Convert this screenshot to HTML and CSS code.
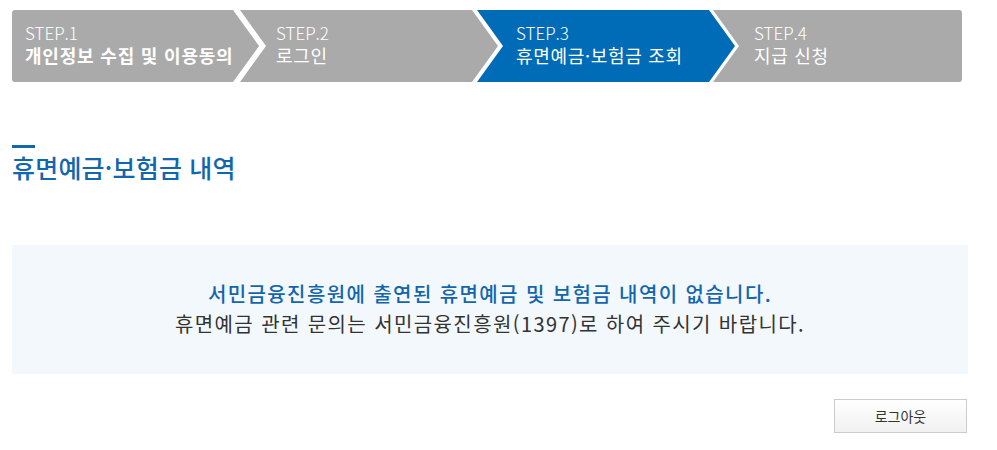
FILE: index.html
```html
<!DOCTYPE html>
<html lang="ko">
<head>
    <meta charset="UTF-8">
    <meta name="viewport" content="width=device-width, initial-scale=1.0">
    <title>휴면예금·보험금 조회</title>
    <link rel="stylesheet" href="styles.css">
</head>
<body>
    <div class="wrap">
        <ol class="steps">
            <li class="step step-first">
                <span class="step-num">STEP.1</span>
                <strong class="step-name">개인정보 수집 및 이용동의</strong>
            </li>
            <li class="step step-mid">
                <span class="step-num">STEP.2</span>
                <span class="step-name">로그인</span>
            </li>
            <li class="step step-mid step-on">
                <span class="step-num">STEP.3</span>
                <span class="step-name">휴면예금·보험금 조회</span>
            </li>
            <li class="step step-last">
                <span class="step-num">STEP.4</span>
                <span class="step-name">지급 신청</span>
            </li>
        </ol>

        <h2 class="title">휴면예금·보험금 내역</h2>

        <div class="result-box">
            <p class="result-main">서민금융진흥원에 출연된 휴면예금 및 보험금 내역이 없습니다.</p>
            <p class="result-sub">휴면예금 관련 문의는 서민금융진흥원(1397)로 하여 주시기 바랍니다.</p>
        </div>

        <div class="btn-area">
            <button type="button" class="btn-logout">로그아웃</button>
        </div>
    </div>
</body>
</html>
```

FILE: styles.css
```css
body {
    font-family: "Noto Sans CJK KR", "Noto Sans", sans-serif;
    margin: 0;
    padding: 0;
    color: #333;
    background: #fff;
}
.wrap {
    width: 956px;
    padding: 10px 0 0 12px;
}
.steps {
    display: flex;
    list-style: none;
    margin: 0 6px 0 0;
    padding: 0;
    height: 72px;
}
.step {
    display: flex;
    flex-direction: column;
    justify-content: center;
    box-sizing: border-box;
    height: 72px;
    padding-bottom: 4px;
    background-color: #aaaaaa;
    color: #fff;
    font-size: 18px;
    line-height: 22px;
}
.step-on {
    background-color: #006cb7;
}
.step-first {
    width: 247px;
    padding-left: 13px;
    border-radius: 3px 0 0 3px;
    clip-path: polygon(0 0, calc(100% - 26px) 0, 100% 50%, calc(100% - 26px) 100%, 0 100%);
}
.step-mid {
    width: 258px;
    margin-left: -19px;
    padding-left: 36px;
    clip-path: polygon(0 0, calc(100% - 26px) 0, 100% 50%, calc(100% - 26px) 100%, 0 100%, 26px 50%);
}
.step-mid.step-on {
    margin-left: -21px;
    padding-left: 39px;
}
.step-last {
    flex: 1;
    margin-left: -22px;
    padding-left: 41px;
    border-radius: 0 3px 3px 0;
    clip-path: polygon(0 0, 100% 0, 100% 100%, 0 100%, 26px 50%);
}
.step-num {
    font-size: 17px;
    font-weight: 300;
}
.step-name {
    font-weight: 400;
    letter-spacing: 0.7px;
}
.step-first .step-name {
    font-weight: 700;
    letter-spacing: 0.8px;
}
.title {
    margin: 63px 0 0;
    color: #1266ae;
    font-size: 25px;
    font-weight: 500;
    line-height: 30px;
    letter-spacing: 0.2px;
}
.title:before {
    content: "";
    display: block;
    width: 23px;
    height: 3px;
    margin-bottom: 4px;
    background-color: #1266ae;
}
.result-box {
    margin-top: 63px;
    padding: 34px 0 35px;
    background-color: #f2f8fc;
    text-align: center;
    font-size: 20px;
    line-height: 30px;
    letter-spacing: 1.4px;
}
.result-box p {
    margin: 0;
}
.result-main {
    color: #1266ae;
    font-weight: 500;
}
.result-sub {
    color: #333;
}
.btn-area {
    margin-top: 25px;
    text-align: right;
}
.btn-logout {
    width: 133px;
    height: 34px;
    margin-right: 1px;
    border: 1px solid #ccc;
    background: linear-gradient(#fff, #f1f1f1);
    color: #333;
    font-family: inherit;
    font-size: 14px;
    cursor: pointer;
}
```
